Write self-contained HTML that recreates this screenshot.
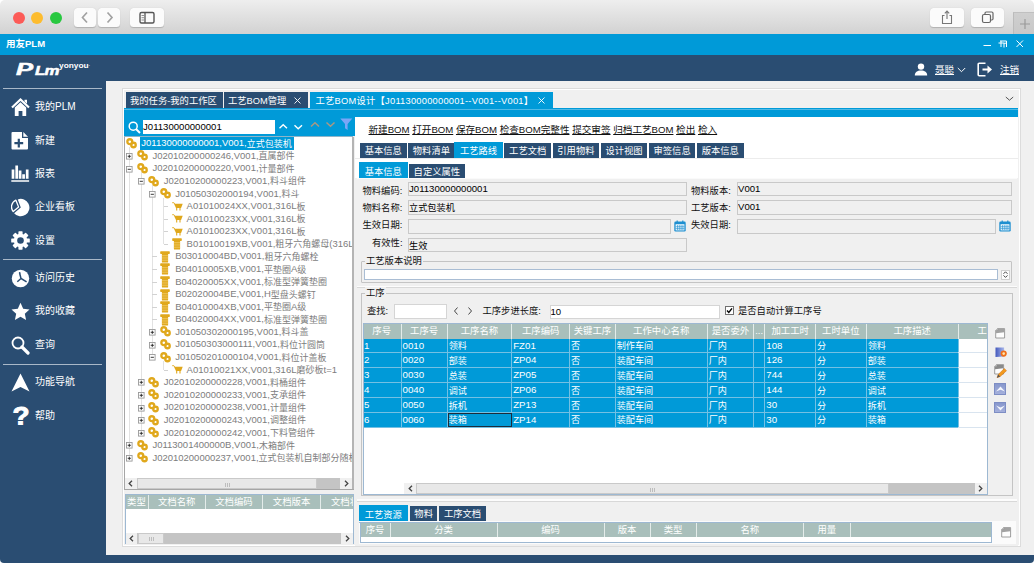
<!DOCTYPE html>
<html><head><meta charset="utf-8"><title>用友PLM</title>
<style>
*{box-sizing:border-box;margin:0;padding:0}
html,body{width:1034px;height:563px;overflow:hidden;background:#fff}
body{font-family:"Liberation Sans","Noto Sans CJK SC",sans-serif;font-size:10px;color:#000;position:relative}
div,svg{position:absolute}
.t{white-space:nowrap;line-height:12px}
#win{left:0;top:0;width:1034px;height:563px;border-radius:5px 5px 4px 4px;overflow:hidden}
#mac{left:0;top:0;width:1034px;height:34px;background:linear-gradient(#eeeeee,#d2d2d2)}
.tl{top:12px;width:12px;height:12px;border-radius:50%}
.mbtn{top:8px;height:19px;background:#fbfbfb;border-radius:3.5px;box-shadow:0 0.5px 1px rgba(0,0,0,.18)}
#blue{left:0;top:34px;width:1034px;height:21px;background:#009ad8}
#hdr{left:0;top:55px;width:1034px;height:26px;background:#2a4d72}
#side{left:0;top:81px;width:106px;height:482px;background:#2a4d72}
.sep{left:3px;width:99px;height:1px;background:#a9b8c8}
.nav{left:35px;color:#fff;font-size:10px;line-height:14px;white-space:nowrap}
#main{left:106px;top:81px;width:928px;height:474.2px;background:#f0f0f0}
#inner{left:122.5px;top:89px;width:897.5px;height:457px;background:#f0f0f0;border:1px solid #fff;box-shadow:0 0 0 1px #dcdcdc}
.tab{top:92.2px;height:15.9px;background:#2a4d72;color:#fff;font-size:9.3px;line-height:18px;white-space:nowrap;padding-left:4px;overflow:hidden}
.tab.on{background:#009ad8}
.tab2{height:15.5px;background:#2a4d72;color:#fff;font-size:9.3px;line-height:15.5px;overflow:hidden;padding-top:1.3px;white-space:nowrap;text-align:center}
.tab2.on{background:#009ad8}
.tr{left:0;height:12.58px;width:230px;color:#7d7d7d;font-size:9.5px;line-height:12.6px;white-space:nowrap}
.tr .x{top:0;white-space:nowrap}
.inp{background:#f0f0f0;border:1px solid #c9c9c9;height:14.5px;font-size:9.6px;line-height:12px;padding-left:0;white-space:nowrap;overflow:hidden}
.lab{font-size:9.3px;line-height:12px;white-space:nowrap;color:#111}
.th{top:0;height:100%;color:#fff;font-size:9.4px;text-align:center;white-space:nowrap;border-right:1px solid #e4ecea;overflow:hidden}
.td{top:0;height:100%;color:#fff;font-size:9.7px;white-space:nowrap;border-right:1px solid #74c0e3;padding-left:1px;overflow:hidden}
.row{left:0;height:14.84px;background:#009ad8;border-bottom:1px solid #74c0e3;line-height:14px}
.sb{background:#c4c4c4}
.sbt{background:#e8e8e8;border:1px solid #c9c9c9}
.sba{background:#f0f0f0;color:#444;font-size:8px;font-weight:bold;text-align:center}
</style></head><body>
<div id="win">
<div id="mac">
<div class="tl" style="left:13px;background:#fc5b57"></div>
<div class="tl" style="left:31px;background:#fdbc2e"></div>
<div class="tl" style="left:50px;background:#28c840"></div>
<div class="mbtn" style="left:73.5px;width:22px"><svg style="left:0;top:0" width="22" height="19" viewBox="0 0 22 19"><path d="M13 4.5 L8.5 9.5 L13 14.5" fill="none" stroke="#a2a2a2" stroke-width="1.7"/></svg></div>
<div class="mbtn" style="left:97.5px;width:22.5px"><svg style="left:0;top:0" width="22" height="19" viewBox="0 0 22 19"><path d="M9.5 4.5 L14 9.5 L9.5 14.5" fill="none" stroke="#a2a2a2" stroke-width="1.7"/></svg></div>
<div class="mbtn" style="left:130px;width:33.5px"><svg style="left:0;top:0" width="33.5" height="19" viewBox="0 0 33.5 19"><rect x="10" y="4.5" width="14" height="10.5" rx="1.5" fill="none" stroke="#555" stroke-width="1.4"/><path d="M15 4.5 V15" stroke="#555" stroke-width="1.3"/><path d="M11.5 7.5h2.5M11.5 9.7h2.5M11.5 12h2.5" stroke="#777" stroke-width="0.8"/></svg></div>
<div class="mbtn" style="left:929.5px;width:34px"><svg style="left:0;top:0" width="34" height="19" viewBox="0 0 34 19"><path d="M14.5 7.5h-2v8h9v-8h-2" fill="none" stroke="#777" stroke-width="1.1"/><path d="M17 11V3.2M14.8 5.3L17 3l2.2 2.3" fill="none" stroke="#777" stroke-width="1.1"/></svg></div>
<div class="mbtn" style="left:971px;width:33px"><svg style="left:0;top:0" width="33" height="19" viewBox="0 0 33 19"><rect x="11.5" y="6.5" width="8" height="8" rx="1.5" fill="none" stroke="#666" stroke-width="1.2"/><path d="M14 6.5V5.2a1.2 1.2 0 0 1 1.2-1.2h5.6a1.2 1.2 0 0 1 1.2 1.2v5.600000000000001a1.2 1.2 0 0 1-1.2 1.2H19.5" fill="none" stroke="#666" stroke-width="1.2"/></svg></div>
<div style="left:1013px;top:12px;width:21px;height:22px;background:linear-gradient(#cfcfcf,#c8c8c8);border-left:1px solid #bbb;border-top:1px solid #c0c0c0"><svg style="left:4.5px;top:4.5px" width="12" height="12" viewBox="0 0 12 12"><path d="M6 1v10M1 6h10" stroke="#9a9a9a" stroke-width="1.2"/></svg></div>
</div>
<div id="blue"><div class="t" style="left:6px;top:4px;color:#fff;font-weight:bold;font-size:9.5px">用友PLM</div>
<svg style="left:982px;top:4px" width="44" height="12" viewBox="0 0 44 12"><path d="M1.5 7.5h7.5" stroke="#fff" stroke-width="1"/><path d="M18 3h6.5v6M16.5 5h5.5v4.5M19 3v6M22 5.2h2" stroke="#fff" stroke-width="1" fill="none"/><path d="M34.5 2.5l6.5 6.5M41 2.5l-6.500000 6.5" stroke="#fff" stroke-width="1"/></svg>
</div>
<div id="hdr">
<div class="t" style="left:15.5px;top:6.5px;color:#fff;font-weight:bold;font-style:italic;font-size:16px;line-height:16px;-webkit-text-stroke:0.5px #fff;transform:scaleX(1.6);transform-origin:0 0">P</div>
<div class="t" style="left:35px;top:9.5px;color:#fff;font-weight:bold;font-style:italic;font-size:12.5px;line-height:13px;letter-spacing:-0.6px;transform:scaleX(1.35);transform-origin:0 0;-webkit-text-stroke:0.5px #fff">Lm</div>
<div class="t" style="left:59px;top:6.5px;color:#fff;font-weight:bold;font-size:6.5px;line-height:7px;transform:scaleX(1.28);transform-origin:0 0">yonyou<span style="font-size:4px;vertical-align:top">·</span></div>
<svg style="left:914px;top:8px" width="14" height="13" viewBox="0 0 14 13"><circle cx="7" cy="3.6" r="3.2" fill="#fff"/><path d="M0.800000 12.5c0-3.300000 2.500000-5 6.200000-5s6.200000 1.700000 6.200000 5z" fill="#fff"/></svg>
<div class="t" style="left:935px;top:9px;color:#fff;font-size:9.5px;text-decoration:underline">聂聪</div>
<svg style="left:957px;top:11.500000px" width="9" height="6" viewBox="0 0 9 6"><path d="M0.800000 1l3.700000 3.700000L8.200000 1" fill="none" stroke="#fff" stroke-width="1"/></svg>
<svg style="left:977px;top:7px" width="16" height="15" viewBox="0 0 16 15"><path d="M8.500000 1.200000H2.200000a1 1 0 0 0-1 1v10.600000a1 1 0 0 0 1 1h6.300000" fill="none" stroke="#fff" stroke-width="1.600000"/><path d="M5.500000 7.500000h6" fill="none" stroke="#fff" stroke-width="2"/><path d="M10.500000 3.500000l4.500000 4l-4.500000 4z" fill="#fff"/></svg>
<div class="t" style="left:1000px;top:9px;color:#fff;font-size:9.5px;text-decoration:underline">注销</div>
</div>
<div id="side">
<div class="sep" style="top:7px"></div>
<div class="sep" style="top:178px"></div>
<div class="sep" style="top:282.5px"></div>
<svg style="left:10.5px;top:16.7px" width="19" height="19" viewBox="0 0 19 19"><path d="M1 9.5L9.5 1.5L18 9.5" fill="none" stroke="#fff" stroke-width="2.2"/><path d="M13.5 1.8h2.5v4l-2.5-2.3z" fill="#fff"/><path d="M3.8 9.5L9.5 4.2l5.7 5.3V18h-3.8v-5h-3.8v5H3.8z" fill="#fff"/></svg><div class="nav" style="top:19.2px">我的PLM</div>
<svg style="left:10.5px;top:50.3px" width="19" height="19" viewBox="0 0 19 19"><path d="M1.5 1h9.5v6h6v10.5a1 1 0 0 1-1 1h-14.5a1 1 0 0 1-1-1v-15.5a1 1 0 0 1 1-1z" fill="#fff"/><path d="M12.3 1l4.7 4.7h-4.7z" fill="#fff"/><path d="M7.8 7.8v8.8M3.4 12.2h8.8" stroke="#2a4d72" stroke-width="2.2"/></svg><div class="nav" style="top:52.8px">新建</div>
<svg style="left:10.5px;top:83.8px" width="19" height="19" viewBox="0 0 19 19"><path d="M0.3 15.9h17.8" stroke="#fff" stroke-width="1.5"/><path d="M2 4.5v9.2M5.7 0.4v13.3M9.1 5.4v8.3M12.6 9.3v4.4M16.2 4.5v9.2" stroke="#fff" stroke-width="2.7"/></svg><div class="nav" style="top:86.3px">报表</div>
<svg style="left:10.5px;top:116.8px" width="19" height="19" viewBox="0 0 19 19"><path d="M9.8 9.6L6.8 1.4A8.7 8.7 0 1 1 3.1 15.2z" fill="#fff"/><path d="M7.6 9L2.2 13.5A7.3 7.3 0 0 1 4.9 2.2z" fill="none" stroke="#fff" stroke-width="1.3" stroke-linejoin="round"/></svg><div class="nav" style="top:119.3px">企业看板</div>
<svg style="left:10.5px;top:150.0px" width="19" height="19" viewBox="0 0 19 19"><g transform="translate(9.5 9.5)"><g fill="#fff"><rect x="-2.1" y="-9.3" width="4.2" height="18.6" rx="0.7"/><rect x="-2.1" y="-9.3" width="4.2" height="18.6" rx="0.7" transform="rotate(45)"/><rect x="-2.1" y="-9.3" width="4.2" height="18.6" rx="0.7" transform="rotate(90)"/><rect x="-2.1" y="-9.3" width="4.2" height="18.6" rx="0.7" transform="rotate(135)"/><circle r="6.7"/></g><circle r="3.3" fill="#2a4d72"/></g></svg><div class="nav" style="top:152.5px">设置</div>
<svg style="left:10.5px;top:187.5px" width="19" height="19" viewBox="0 0 19 19"><circle cx="9.5" cy="9.5" r="8.7" fill="#fff"/><circle cx="8.7" cy="4" r="0.9" fill="#2a4d72"/><path d="M8.7 4.5l1.3 5l5.6 3.3M10 9.5l-3.7 3.3" fill="none" stroke="#2a4d72" stroke-width="1.5"/></svg><div class="nav" style="top:190.0px">访问历史</div>
<svg style="left:10.5px;top:220.9px" width="19" height="19" viewBox="0 0 19 19"><path d="M9.5 0.8l2.7 5.9 6.3 0.7-4.7 4.3 1.3 6.3-5.6-3.2-5.6 3.2 1.3-6.3-4.7-4.3 6.3-0.7z" fill="#fff"/></svg><div class="nav" style="top:223.4px">我的收藏</div>
<svg style="left:10.5px;top:254.5px" width="19" height="19" viewBox="0 0 19 19"><circle cx="7" cy="7" r="5.5" fill="none" stroke="#fff" stroke-width="1.8"/><path d="M11 11l6 6" stroke="#fff" stroke-width="3.2" stroke-linecap="round"/></svg><div class="nav" style="top:257.0px">查询</div>
<svg style="left:10.5px;top:291.5px" width="19" height="19" viewBox="0 0 19 19"><path d="M9.5 0.5L18.5 18.5L9.5 14L0.5 18.5z" fill="#fff"/></svg><div class="nav" style="top:294.0px">功能导航</div>
<svg style="left:10.5px;top:325.2px" width="19" height="19" viewBox="0 0 19 19"><text x="0" y="18.5" font-family="Liberation Sans,sans-serif" font-weight="bold" font-size="25" fill="#fff" stroke="#fff" stroke-width="0.9" transform="translate(1.5 0) scale(1.12 1)">?</text></svg><div class="nav" style="top:327.7px">帮助</div>
</div>
<div style="left:106px;top:555px;width:928px;height:8px;background:#2a4d72"></div>
<div id="main"></div>
<div id="inner"></div>
<div class="tab" style="left:126px;width:96.5px">我的任务-我的工作区</div>
<div class="tab" style="left:224px;width:83.5px">工艺BOM管理<svg style="left:70px;top:4.5px" width="7" height="7" viewBox="0 0 7 7"><path d="M0.5 0.5l6 6M6.5 0.5l-6 6" stroke="#fff" stroke-width="0.9"/></svg></div>
<div class="tab on" style="left:309.5px;width:243.5px;padding-left:6px;letter-spacing:0.24px">工艺BOM设计【J01130000000001--V001--V001】<svg style="left:228.5px;top:4.5px" width="7" height="7" viewBox="0 0 7 7"><path d="M0.5 0.5l6 6M6.5 0.5l-6 6" stroke="#fff" stroke-width="0.9"/></svg></div>
<svg style="left:1005px;top:96px" width="9" height="6" viewBox="0 0 9 6"><path d="M0.8 1l3.7 3.2L8.2 1" fill="none" stroke="#555" stroke-width="1"/></svg>
<div style="left:124px;top:108px;width:893.5px;height:8.7px;background:#009ad8"></div>
<div style="left:124px;top:108px;width:230.5px;height:28.3px;background:#009ad8"></div>
<div style="left:124px;top:108.8px;width:893.5px;height:1px;background:#4fb9e6"></div>
<svg style="left:128px;top:120.8px" width="13" height="13" viewBox="0 0 13 13"><circle cx="5.2" cy="5.2" r="4" fill="none" stroke="#fff" stroke-width="1.5"/><path d="M8 8l4 4" stroke="#fff" stroke-width="2"/></svg>
<div style="left:142.5px;top:119.5px;width:132.5px;height:14px;background:#fff"><div class="t" style="left:0.5px;top:1px;font-size:9.6px">J01130000000001</div></div>
<svg style="left:278px;top:121px" width="76" height="12" viewBox="0 0 76 12" overflow="visible"><path d="M1.5 7.2l3.7-3.5L9 7.2" fill="none" stroke="#fff" stroke-width="1.4"/><path d="M16.5 4.2l3.7 3.5L24 4.2" fill="none" stroke="#fff" stroke-width="1.4"/><path d="M33 5.5l4-3.7 4 3.7" fill="none" stroke="#aa9882" stroke-width="1.5"/><path d="M48.5 1.5l4 3.7 4-3.7" fill="none" stroke="#aa9882" stroke-width="1.5"/><path d="M62.3 -2.5h12l-4.7 5.5v6l-2.6-1.8v-4.2z" fill="#7aa6f7"/></svg>
<div style="left:124px;top:136.5px;width:229.5px;height:342px;background:#fff;overflow:hidden">
<div style="left:5.2px;top:10.7px;width:1px;height:307.5px;background:#e2e2e2"></div><div style="left:16.6px;top:35.9px;width:1px;height:257.2px;background:#e2e2e2"></div><div style="left:28.0px;top:48.4px;width:1px;height:169.1px;background:#e2e2e2"></div><div style="left:39.4px;top:61.0px;width:1px;height:46.3px;background:#e2e2e2"></div><div style="left:39.4px;top:224.6px;width:1px;height:8.6px;background:#e2e2e2"></div><div class="tr" style="top:0.70px"><svg style="left:2.4px;top:0.6px" width="12" height="12" viewBox="0 0 12 12"><circle cx="3.8" cy="3.7" r="2.45" fill="none" stroke="#e0a81c" stroke-width="2.3"/><circle cx="7.5" cy="7" r="2.25" fill="none" stroke="#e0a81c" stroke-width="2.3"/></svg><div class="x" style="left:15.9px;width:154.6px;height:12.4px;background:#009ad8;color:#fff;padding-left:1.4px">J01130000000001,V001,<span style="font-size:9px;position:relative;top:0.5px">立式包装机</span></div></div>
<div class="tr" style="top:13.28px"><svg style="left:2.4px;top:3.2px" width="7" height="7" viewBox="0 0 7 7"><rect x="0.5" y="0.5" width="5.6" height="5.6" fill="#fff" stroke="#999" stroke-width="0.9"/><path d="M1.7 3.3h3.2" stroke="#222" stroke-width="0.9"/><path d="M3.3 1.7v3.2" stroke="#222" stroke-width="0.9"/></svg><svg style="left:13.0px;top:0.6px" width="12" height="12" viewBox="0 0 12 12"><circle cx="3.8" cy="3.7" r="2.45" fill="none" stroke="#e0a81c" stroke-width="2.3"/><circle cx="7.5" cy="7" r="2.25" fill="none" stroke="#e0a81c" stroke-width="2.3"/></svg><div class="x" style="left:28.4px">J02010200000246,V001,<span style="font-size:9px;position:relative;top:0.5px">直属部件</span></div></div>
<div class="tr" style="top:25.86px"><svg style="left:2.4px;top:3.2px" width="7" height="7" viewBox="0 0 7 7"><rect x="0.5" y="0.5" width="5.6" height="5.6" fill="#fff" stroke="#999" stroke-width="0.9"/><path d="M1.7 3.3h3.2" stroke="#222" stroke-width="0.9"/></svg><svg style="left:13.0px;top:0.6px" width="12" height="12" viewBox="0 0 12 12"><circle cx="3.8" cy="3.7" r="2.45" fill="none" stroke="#e0a81c" stroke-width="2.3"/><circle cx="7.5" cy="7" r="2.25" fill="none" stroke="#e0a81c" stroke-width="2.3"/></svg><div class="x" style="left:28.4px">J02010200000220,V001,<span style="font-size:9px;position:relative;top:0.5px">计量部件</span></div></div>
<div class="tr" style="top:38.44px"><svg style="left:13.8px;top:3.2px" width="7" height="7" viewBox="0 0 7 7"><rect x="0.5" y="0.5" width="5.6" height="5.6" fill="#fff" stroke="#999" stroke-width="0.9"/><path d="M1.7 3.3h3.2" stroke="#222" stroke-width="0.9"/></svg><svg style="left:24.4px;top:0.6px" width="12" height="12" viewBox="0 0 12 12"><circle cx="3.8" cy="3.7" r="2.45" fill="none" stroke="#e0a81c" stroke-width="2.3"/><circle cx="7.5" cy="7" r="2.25" fill="none" stroke="#e0a81c" stroke-width="2.3"/></svg><div class="x" style="left:39.8px">J02010200000223,V001,<span style="font-size:9px;position:relative;top:0.5px">料斗组件</span></div></div>
<div class="tr" style="top:51.02px"><svg style="left:25.2px;top:3.2px" width="7" height="7" viewBox="0 0 7 7"><rect x="0.5" y="0.5" width="5.6" height="5.6" fill="#fff" stroke="#999" stroke-width="0.9"/><path d="M1.7 3.3h3.2" stroke="#222" stroke-width="0.9"/></svg><svg style="left:35.8px;top:0.6px" width="12" height="12" viewBox="0 0 12 12"><circle cx="3.8" cy="3.7" r="2.45" fill="none" stroke="#e0a81c" stroke-width="2.3"/><circle cx="7.5" cy="7" r="2.25" fill="none" stroke="#e0a81c" stroke-width="2.3"/></svg><div class="x" style="left:51.2px">J01050302000194,V001,<span style="font-size:9px;position:relative;top:0.5px">料斗</span></div></div>
<div class="tr" style="top:63.60px"><div style="left:39.8px;top:6px;width:4.5px;height:1px;background:#d2d2d2"></div><svg style="left:47.8px;top:1.8px" width="11" height="9" viewBox="0 0 11 9"><path d="M0.2 0.7H1.9L2.7 2" fill="none" stroke="#e0a81c" stroke-width="0.9"/><path d="M2 1.7H10.7L9.1 6H4z" fill="#e0a81c"/><path d="M4.7 5.8V8.6M8 5.8V8.6" stroke="#e0a81c" stroke-width="1.1"/></svg><div class="x" style="left:62.6px">A01010024XX,V001,316L<span style="font-size:9px;position:relative;top:0.5px">板</span></div></div>
<div class="tr" style="top:76.18px"><div style="left:39.8px;top:6px;width:4.5px;height:1px;background:#d2d2d2"></div><svg style="left:47.8px;top:1.8px" width="11" height="9" viewBox="0 0 11 9"><path d="M0.2 0.7H1.9L2.7 2" fill="none" stroke="#e0a81c" stroke-width="0.9"/><path d="M2 1.7H10.7L9.1 6H4z" fill="#e0a81c"/><path d="M4.7 5.8V8.6M8 5.8V8.6" stroke="#e0a81c" stroke-width="1.1"/></svg><div class="x" style="left:62.6px">A01010023XX,V001,316L<span style="font-size:9px;position:relative;top:0.5px">板</span></div></div>
<div class="tr" style="top:88.76px"><div style="left:39.8px;top:6px;width:4.5px;height:1px;background:#d2d2d2"></div><svg style="left:47.8px;top:1.8px" width="11" height="9" viewBox="0 0 11 9"><path d="M0.2 0.7H1.9L2.7 2" fill="none" stroke="#e0a81c" stroke-width="0.9"/><path d="M2 1.7H10.7L9.1 6H4z" fill="#e0a81c"/><path d="M4.7 5.8V8.6M8 5.8V8.6" stroke="#e0a81c" stroke-width="1.1"/></svg><div class="x" style="left:62.6px">A01010023XX,V001,316L<span style="font-size:9px;position:relative;top:0.5px">板</span></div></div>
<div class="tr" style="top:101.34px"><div style="left:39.8px;top:6px;width:4.5px;height:1px;background:#d2d2d2"></div><svg style="left:47.6px;top:0.4px" width="10" height="12" viewBox="0 0 10 12"><rect x="0.2" y="0.2" width="9.6" height="2.7" rx="0.7" fill="#e0a81c"/><path d="M1.9 2.8h6.2v8.2a0.6 0.6 0 0 1-0.6 0.6h-5a0.6 0.6 0 0 1-0.6-0.6z" fill="#e0a81c"/><path d="M1.9 4.5h6.2M1.9 6.2h6.2M1.9 7.9h6.2M1.9 9.6h6.2" stroke="#f1cf74" stroke-width="0.6"/></svg><div class="x" style="left:62.6px">B01010019XB,V001,<span style="font-size:9px;position:relative;top:0.5px">粗牙六角螺母</span>(316L</div></div>
<div class="tr" style="top:113.92px"><div style="left:28.4px;top:6px;width:4.5px;height:1px;background:#d2d2d2"></div><svg style="left:36.2px;top:0.4px" width="10" height="12" viewBox="0 0 10 12"><rect x="0.2" y="0.2" width="9.6" height="2.7" rx="0.7" fill="#e0a81c"/><path d="M1.9 2.8h6.2v8.2a0.6 0.6 0 0 1-0.6 0.6h-5a0.6 0.6 0 0 1-0.6-0.6z" fill="#e0a81c"/><path d="M1.9 4.5h6.2M1.9 6.2h6.2M1.9 7.9h6.2M1.9 9.6h6.2" stroke="#f1cf74" stroke-width="0.6"/></svg><div class="x" style="left:51.2px">B03010004BD,V001,<span style="font-size:9px;position:relative;top:0.5px">粗牙六角螺栓</span></div></div>
<div class="tr" style="top:126.50px"><div style="left:28.4px;top:6px;width:4.5px;height:1px;background:#d2d2d2"></div><svg style="left:36.2px;top:0.4px" width="10" height="12" viewBox="0 0 10 12"><rect x="0.2" y="0.2" width="9.6" height="2.7" rx="0.7" fill="#e0a81c"/><path d="M1.9 2.8h6.2v8.2a0.6 0.6 0 0 1-0.6 0.6h-5a0.6 0.6 0 0 1-0.6-0.6z" fill="#e0a81c"/><path d="M1.9 4.5h6.2M1.9 6.2h6.2M1.9 7.9h6.2M1.9 9.6h6.2" stroke="#f1cf74" stroke-width="0.6"/></svg><div class="x" style="left:51.2px">B04010005XB,V001,<span style="font-size:9px;position:relative;top:0.5px">平垫圈</span>A<span style="font-size:9px;position:relative;top:0.5px">级</span></div></div>
<div class="tr" style="top:139.08px"><div style="left:28.4px;top:6px;width:4.5px;height:1px;background:#d2d2d2"></div><svg style="left:36.2px;top:0.4px" width="10" height="12" viewBox="0 0 10 12"><rect x="0.2" y="0.2" width="9.6" height="2.7" rx="0.7" fill="#e0a81c"/><path d="M1.9 2.8h6.2v8.2a0.6 0.6 0 0 1-0.6 0.6h-5a0.6 0.6 0 0 1-0.6-0.6z" fill="#e0a81c"/><path d="M1.9 4.5h6.2M1.9 6.2h6.2M1.9 7.9h6.2M1.9 9.6h6.2" stroke="#f1cf74" stroke-width="0.6"/></svg><div class="x" style="left:51.2px">B04020005XX,V001,<span style="font-size:9px;position:relative;top:0.5px">标准型弹簧垫圈</span></div></div>
<div class="tr" style="top:151.66px"><div style="left:28.4px;top:6px;width:4.5px;height:1px;background:#d2d2d2"></div><svg style="left:36.2px;top:0.4px" width="10" height="12" viewBox="0 0 10 12"><rect x="0.2" y="0.2" width="9.6" height="2.7" rx="0.7" fill="#e0a81c"/><path d="M1.9 2.8h6.2v8.2a0.6 0.6 0 0 1-0.6 0.6h-5a0.6 0.6 0 0 1-0.6-0.6z" fill="#e0a81c"/><path d="M1.9 4.5h6.2M1.9 6.2h6.2M1.9 7.9h6.2M1.9 9.6h6.2" stroke="#f1cf74" stroke-width="0.6"/></svg><div class="x" style="left:51.2px">B02020004BE,V001,H<span style="font-size:9px;position:relative;top:0.5px">型盘头螺钉</span></div></div>
<div class="tr" style="top:164.24px"><div style="left:28.4px;top:6px;width:4.5px;height:1px;background:#d2d2d2"></div><svg style="left:36.2px;top:0.4px" width="10" height="12" viewBox="0 0 10 12"><rect x="0.2" y="0.2" width="9.6" height="2.7" rx="0.7" fill="#e0a81c"/><path d="M1.9 2.8h6.2v8.2a0.6 0.6 0 0 1-0.6 0.6h-5a0.6 0.6 0 0 1-0.6-0.6z" fill="#e0a81c"/><path d="M1.9 4.5h6.2M1.9 6.2h6.2M1.9 7.9h6.2M1.9 9.6h6.2" stroke="#f1cf74" stroke-width="0.6"/></svg><div class="x" style="left:51.2px">B04010004XB,V001,<span style="font-size:9px;position:relative;top:0.5px">平垫圈</span>A<span style="font-size:9px;position:relative;top:0.5px">级</span></div></div>
<div class="tr" style="top:176.82px"><div style="left:28.4px;top:6px;width:4.5px;height:1px;background:#d2d2d2"></div><svg style="left:36.2px;top:0.4px" width="10" height="12" viewBox="0 0 10 12"><rect x="0.2" y="0.2" width="9.6" height="2.7" rx="0.7" fill="#e0a81c"/><path d="M1.9 2.8h6.2v8.2a0.6 0.6 0 0 1-0.6 0.6h-5a0.6 0.6 0 0 1-0.6-0.6z" fill="#e0a81c"/><path d="M1.9 4.5h6.2M1.9 6.2h6.2M1.9 7.9h6.2M1.9 9.6h6.2" stroke="#f1cf74" stroke-width="0.6"/></svg><div class="x" style="left:51.2px">B04020004XX,V001,<span style="font-size:9px;position:relative;top:0.5px">标准型弹簧垫圈</span></div></div>
<div class="tr" style="top:189.40px"><svg style="left:25.2px;top:3.2px" width="7" height="7" viewBox="0 0 7 7"><rect x="0.5" y="0.5" width="5.6" height="5.6" fill="#fff" stroke="#999" stroke-width="0.9"/><path d="M1.7 3.3h3.2" stroke="#222" stroke-width="0.9"/><path d="M3.3 1.7v3.2" stroke="#222" stroke-width="0.9"/></svg><svg style="left:35.8px;top:0.6px" width="12" height="12" viewBox="0 0 12 12"><circle cx="3.8" cy="3.7" r="2.45" fill="none" stroke="#e0a81c" stroke-width="2.3"/><circle cx="7.5" cy="7" r="2.25" fill="none" stroke="#e0a81c" stroke-width="2.3"/></svg><div class="x" style="left:51.2px">J01050302000195,V001,<span style="font-size:9px;position:relative;top:0.5px">料斗盖</span></div></div>
<div class="tr" style="top:201.98px"><svg style="left:25.2px;top:3.2px" width="7" height="7" viewBox="0 0 7 7"><rect x="0.5" y="0.5" width="5.6" height="5.6" fill="#fff" stroke="#999" stroke-width="0.9"/><path d="M1.7 3.3h3.2" stroke="#222" stroke-width="0.9"/><path d="M3.3 1.7v3.2" stroke="#222" stroke-width="0.9"/></svg><svg style="left:35.8px;top:0.6px" width="12" height="12" viewBox="0 0 12 12"><circle cx="3.8" cy="3.7" r="2.45" fill="none" stroke="#e0a81c" stroke-width="2.3"/><circle cx="7.5" cy="7" r="2.25" fill="none" stroke="#e0a81c" stroke-width="2.3"/></svg><div class="x" style="left:51.2px">J01050303000111,V001,<span style="font-size:9px;position:relative;top:0.5px">料位计圆筒</span></div></div>
<div class="tr" style="top:214.56px"><svg style="left:25.2px;top:3.2px" width="7" height="7" viewBox="0 0 7 7"><rect x="0.5" y="0.5" width="5.6" height="5.6" fill="#fff" stroke="#999" stroke-width="0.9"/><path d="M1.7 3.3h3.2" stroke="#222" stroke-width="0.9"/></svg><svg style="left:35.8px;top:0.6px" width="12" height="12" viewBox="0 0 12 12"><circle cx="3.8" cy="3.7" r="2.45" fill="none" stroke="#e0a81c" stroke-width="2.3"/><circle cx="7.5" cy="7" r="2.25" fill="none" stroke="#e0a81c" stroke-width="2.3"/></svg><div class="x" style="left:51.2px">J01050201000104,V001,<span style="font-size:9px;position:relative;top:0.5px">料位计盖板</span></div></div>
<div class="tr" style="top:227.14px"><div style="left:39.8px;top:6px;width:4.5px;height:1px;background:#d2d2d2"></div><svg style="left:47.8px;top:1.8px" width="11" height="9" viewBox="0 0 11 9"><path d="M0.2 0.7H1.9L2.7 2" fill="none" stroke="#e0a81c" stroke-width="0.9"/><path d="M2 1.7H10.7L9.1 6H4z" fill="#e0a81c"/><path d="M4.7 5.8V8.6M8 5.8V8.6" stroke="#e0a81c" stroke-width="1.1"/></svg><div class="x" style="left:62.6px">A01010021XX,V001,316L<span style="font-size:9px;position:relative;top:0.5px">磨砂板</span>t=1</div></div>
<div class="tr" style="top:239.72px"><svg style="left:13.8px;top:3.2px" width="7" height="7" viewBox="0 0 7 7"><rect x="0.5" y="0.5" width="5.6" height="5.6" fill="#fff" stroke="#999" stroke-width="0.9"/><path d="M1.7 3.3h3.2" stroke="#222" stroke-width="0.9"/><path d="M3.3 1.7v3.2" stroke="#222" stroke-width="0.9"/></svg><svg style="left:24.4px;top:0.6px" width="12" height="12" viewBox="0 0 12 12"><circle cx="3.8" cy="3.7" r="2.45" fill="none" stroke="#e0a81c" stroke-width="2.3"/><circle cx="7.5" cy="7" r="2.25" fill="none" stroke="#e0a81c" stroke-width="2.3"/></svg><div class="x" style="left:39.8px">J02010200000228,V001,<span style="font-size:9px;position:relative;top:0.5px">料桶组件</span></div></div>
<div class="tr" style="top:252.30px"><svg style="left:13.8px;top:3.2px" width="7" height="7" viewBox="0 0 7 7"><rect x="0.5" y="0.5" width="5.6" height="5.6" fill="#fff" stroke="#999" stroke-width="0.9"/><path d="M1.7 3.3h3.2" stroke="#222" stroke-width="0.9"/><path d="M3.3 1.7v3.2" stroke="#222" stroke-width="0.9"/></svg><svg style="left:24.4px;top:0.6px" width="12" height="12" viewBox="0 0 12 12"><circle cx="3.8" cy="3.7" r="2.45" fill="none" stroke="#e0a81c" stroke-width="2.3"/><circle cx="7.5" cy="7" r="2.25" fill="none" stroke="#e0a81c" stroke-width="2.3"/></svg><div class="x" style="left:39.8px">J02010200000233,V001,<span style="font-size:9px;position:relative;top:0.5px">支承组件</span></div></div>
<div class="tr" style="top:264.88px"><svg style="left:13.8px;top:3.2px" width="7" height="7" viewBox="0 0 7 7"><rect x="0.5" y="0.5" width="5.6" height="5.6" fill="#fff" stroke="#999" stroke-width="0.9"/><path d="M1.7 3.3h3.2" stroke="#222" stroke-width="0.9"/><path d="M3.3 1.7v3.2" stroke="#222" stroke-width="0.9"/></svg><svg style="left:24.4px;top:0.6px" width="12" height="12" viewBox="0 0 12 12"><circle cx="3.8" cy="3.7" r="2.45" fill="none" stroke="#e0a81c" stroke-width="2.3"/><circle cx="7.5" cy="7" r="2.25" fill="none" stroke="#e0a81c" stroke-width="2.3"/></svg><div class="x" style="left:39.8px">J02010200000238,V001,<span style="font-size:9px;position:relative;top:0.5px">计量组件</span></div></div>
<div class="tr" style="top:277.46px"><svg style="left:13.8px;top:3.2px" width="7" height="7" viewBox="0 0 7 7"><rect x="0.5" y="0.5" width="5.6" height="5.6" fill="#fff" stroke="#999" stroke-width="0.9"/><path d="M1.7 3.3h3.2" stroke="#222" stroke-width="0.9"/><path d="M3.3 1.7v3.2" stroke="#222" stroke-width="0.9"/></svg><svg style="left:24.4px;top:0.6px" width="12" height="12" viewBox="0 0 12 12"><circle cx="3.8" cy="3.7" r="2.45" fill="none" stroke="#e0a81c" stroke-width="2.3"/><circle cx="7.5" cy="7" r="2.25" fill="none" stroke="#e0a81c" stroke-width="2.3"/></svg><div class="x" style="left:39.8px">J02010200000243,V001,<span style="font-size:9px;position:relative;top:0.5px">调整组件</span></div></div>
<div class="tr" style="top:290.04px"><svg style="left:13.8px;top:3.2px" width="7" height="7" viewBox="0 0 7 7"><rect x="0.5" y="0.5" width="5.6" height="5.6" fill="#fff" stroke="#999" stroke-width="0.9"/><path d="M1.7 3.3h3.2" stroke="#222" stroke-width="0.9"/><path d="M3.3 1.7v3.2" stroke="#222" stroke-width="0.9"/></svg><svg style="left:24.4px;top:0.6px" width="12" height="12" viewBox="0 0 12 12"><circle cx="3.8" cy="3.7" r="2.45" fill="none" stroke="#e0a81c" stroke-width="2.3"/><circle cx="7.5" cy="7" r="2.25" fill="none" stroke="#e0a81c" stroke-width="2.3"/></svg><div class="x" style="left:39.8px">J02010200000242,V001,<span style="font-size:9px;position:relative;top:0.5px">下料管组件</span></div></div>
<div class="tr" style="top:302.62px"><svg style="left:2.4px;top:3.2px" width="7" height="7" viewBox="0 0 7 7"><rect x="0.5" y="0.5" width="5.6" height="5.6" fill="#fff" stroke="#999" stroke-width="0.9"/><path d="M1.7 3.3h3.2" stroke="#222" stroke-width="0.9"/><path d="M3.3 1.7v3.2" stroke="#222" stroke-width="0.9"/></svg><svg style="left:13.0px;top:0.6px" width="12" height="12" viewBox="0 0 12 12"><circle cx="3.8" cy="3.7" r="2.45" fill="none" stroke="#e0a81c" stroke-width="2.3"/><circle cx="7.5" cy="7" r="2.25" fill="none" stroke="#e0a81c" stroke-width="2.3"/></svg><div class="x" style="left:28.4px">J0113001400000B,V001,<span style="font-size:9px;position:relative;top:0.5px">木箱部件</span></div></div>
<div class="tr" style="top:315.20px"><svg style="left:2.4px;top:3.2px" width="7" height="7" viewBox="0 0 7 7"><rect x="0.5" y="0.5" width="5.6" height="5.6" fill="#fff" stroke="#999" stroke-width="0.9"/><path d="M1.7 3.3h3.2" stroke="#222" stroke-width="0.9"/><path d="M3.3 1.7v3.2" stroke="#222" stroke-width="0.9"/></svg><svg style="left:13.0px;top:0.6px" width="12" height="12" viewBox="0 0 12 12"><circle cx="3.8" cy="3.7" r="2.45" fill="none" stroke="#e0a81c" stroke-width="2.3"/><circle cx="7.5" cy="7" r="2.25" fill="none" stroke="#e0a81c" stroke-width="2.3"/></svg><div class="x" style="left:28.4px">J02010200000237,V001,<span style="font-size:9px;position:relative;top:0.5px">立式包装机自制部分随机</span></div></div>
</div>
<div class="sb" style="left:124.7px;top:478.3px;width:227.7px;height:11.0px"><div class="sba" style="left:0;top:0;width:12.0px;height:11.0px"><svg style="left:3.5px;top:2.0px" width="5" height="7" viewBox="0 0 5 7"><path d="M4 0.8L1.2 3.5L4 6.2" fill="none" stroke="#444" stroke-width="1.3"/></svg></div><div class="sba" style="right:0;top:0;width:12.0px;height:11.0px"><svg style="left:3.5px;top:2.0px" width="5" height="7" viewBox="0 0 5 7"><path d="M1 0.8L3.8 3.5L1 6.2" fill="none" stroke="#444" stroke-width="1.3"/></svg></div><div class="sbt" style="left:12.8px;top:0;width:180.0px;height:11.0px"><div style="left:50%;top:3.5px;margin-left:-2px;width:5px;height:4px;border-left:1px solid #bdbdbd;border-right:1px solid #bdbdbd"><div style="left:1px;top:0;width:1px;height:4px;background:#bdbdbd"></div></div></div></div>
<div style="left:352.4px;top:136.5px;width:1.8px;height:353.5px;background:#b4b4b4"></div>
<div style="left:123.6px;top:136.3px;width:1px;height:353.5px;background:#a6a6a6"></div>
<div style="left:123.6px;top:489.3px;width:230.5px;height:1px;background:#a6a6a6"></div>
<div style="left:124px;top:136px;width:229px;height:0.8px;background:#8fb5c9"></div>
<div style="left:124.5px;top:494px;width:229.5px;height:50px;background:#fff;border:1px solid #9db8d2;overflow:hidden"><div style="left:0;top:0;width:260px;height:14px;background:#a9bfbb;line-height:13.5px"><div class="th" style="left:0.0px;width:23.0px">类型</div><div class="th" style="left:23.0px;width:57.4px">文档名称</div><div class="th" style="left:80.4px;width:57.1px">文档编码</div><div class="th" style="left:137.5px;width:58.2px">文档版本</div><div class="th" style="left:195.7px;width:58.0px">文档状态</div></div></div>
<div class="sb" style="left:125.5px;top:533.0px;width:227.5px;height:10.8px"><div class="sba" style="left:0;top:0;width:11.8px;height:10.8px"><svg style="left:3.4px;top:1.9px" width="5" height="7" viewBox="0 0 5 7"><path d="M4 0.8L1.2 3.5L4 6.2" fill="none" stroke="#444" stroke-width="1.3"/></svg></div><div class="sba" style="right:0;top:0;width:11.8px;height:10.8px"><svg style="left:3.4px;top:1.9px" width="5" height="7" viewBox="0 0 5 7"><path d="M1 0.8L3.8 3.5L1 6.2" fill="none" stroke="#444" stroke-width="1.3"/></svg></div><div class="sbt" style="left:12.8px;top:0;width:25.3px;height:10.8px"><div style="left:50%;top:3.4px;margin-left:-2px;width:5px;height:4px;border-left:1px solid #bdbdbd;border-right:1px solid #bdbdbd"><div style="left:1px;top:0;width:1px;height:4px;background:#bdbdbd"></div></div></div></div>
<div style="left:355px;top:116.5px;width:662.5px;height:429px;background:#f0f0f0"></div>
<div style="left:355px;top:116.5px;width:662.5px;height:61.5px;background:#fff"></div>
<div style="left:355px;top:158.2px;width:662.5px;height:1px;background:#ececec"></div>
<div class="t" style="left:368.5px;top:124px;font-size:9.6px;color:#111;word-spacing:0px"><span style="position:static;text-decoration:underline">新建BOM</span> <span style="position:static;text-decoration:underline">打开BOM</span> <span style="position:static;text-decoration:underline">保存BOM</span> <span style="position:static;text-decoration:underline">检查BOM完整性</span> <span style="position:static;text-decoration:underline">提交审签</span> <span style="position:static;text-decoration:underline">归档工艺BOM</span> <span style="position:static;text-decoration:underline">检出</span> <span style="position:static;text-decoration:underline">检入</span></div>
<div class="tab2" style="left:360.0px;top:142.5px;width:46.6px">基本信息</div>
<div class="tab2" style="left:408.1px;top:142.5px;width:46.6px">物料清单</div>
<div class="tab2 on" style="left:454.0px;top:141.5px;width:49px;height:16.5px;line-height:16.5px">工艺路线</div>
<div class="tab2" style="left:504.4px;top:142.5px;width:46.6px">工艺文档</div>
<div class="tab2" style="left:552.6px;top:142.5px;width:46.6px">引用物料</div>
<div class="tab2" style="left:600.7px;top:142.5px;width:46.6px">设计视图</div>
<div class="tab2" style="left:648.8px;top:142.5px;width:46.6px">审签信息</div>
<div class="tab2" style="left:697.0px;top:142.5px;width:46.6px">版本信息</div>
<div class="tab2 on" style="left:358.5px;top:162.3px;width:49.5px;height:16px;line-height:16px">基本信息</div>
<div class="tab2" style="left:409px;top:163.5px;width:55.7px;height:14.8px;line-height:14.8px">自定义属性</div>
<div style="left:357px;top:178.3px;width:660px;height:1px;background:#fafafa"></div>
<div class="lab" style="left:362.5px;top:185.2px">物料编码:</div><div class="inp" style="left:408px;top:181.8px;width:278.8px">J01130000000001</div><div class="lab" style="left:691px;top:185.2px">物料版本:</div><div class="inp" style="left:737px;top:181.8px;width:274.7px">V001</div>
<div class="lab" style="left:362.5px;top:202.2px">物料名称:</div><div class="inp" style="left:408px;top:200.4px;width:278.8px"><span style="font-size:9.2px;position:relative;top:1px">立式包装机</span></div><div class="lab" style="left:691px;top:202.2px">工艺版本:</div><div class="inp" style="left:737px;top:200.4px;width:274.7px">V001</div>
<div class="lab" style="left:362.5px;top:219.1px">生效日期:</div><div class="inp" style="left:408px;top:219.0px;width:263.0px"></div><svg style="left:674.0px;top:219.8px" width="12" height="12" viewBox="0 0 12 12"><rect x="0.3" y="1.6" width="11.4" height="10" rx="1.3" fill="#1e8fd0"/><rect x="1.6" y="4.2" width="8.8" height="6.2" fill="#eaf5fc"/><path d="M3.2 0.6v2.2M8.8 0.6v2.2" stroke="#1e8fd0" stroke-width="1.2"/><path d="M3.5 5v5M5.3 5v5M7.1 5v5M8.9 5v5M1.6 6.7h8.8M1.6 8.6h8.8" stroke="#1e8fd0" stroke-width="0.6"/></svg><div class="lab" style="left:691px;top:219.1px">失效日期:</div><div class="inp" style="left:737px;top:219.0px;width:259.0px"></div><svg style="left:998.5px;top:219.8px" width="12" height="12" viewBox="0 0 12 12"><rect x="0.3" y="1.6" width="11.4" height="10" rx="1.3" fill="#1e8fd0"/><rect x="1.6" y="4.2" width="8.8" height="6.2" fill="#eaf5fc"/><path d="M3.2 0.6v2.2M8.8 0.6v2.2" stroke="#1e8fd0" stroke-width="1.2"/><path d="M3.5 5v5M5.3 5v5M7.1 5v5M8.9 5v5M1.6 6.7h8.8M1.6 8.6h8.8" stroke="#1e8fd0" stroke-width="0.6"/></svg>
<div class="lab" style="left:372.0px;top:236.7px">有效性:</div><div class="inp" style="left:408px;top:237.6px;width:278.8px"><span style="font-size:9.2px;position:relative;top:1px">生效</span></div>
<div style="left:360.5px;top:261px;width:651.5px;height:21.5px;border:1px solid #c4c4c4;border-radius:1px"></div><div class="lab" style="left:365px;top:255px;background:#f0f0f0;padding:0 1px">工艺版本说明</div><div style="left:363.5px;top:269px;width:634px;height:10.5px;background:#fff;border:1px solid #a9bdd4"></div><div style="left:1000.5px;top:269.5px;width:9px;height:10px;background:#fdfdfd;border:1px solid #d0d0d0"><svg style="left:1px;top:0.5px" width="5" height="7" viewBox="0 0 5 7"><path d="M0.5 2.8l2-2 2 2M0.5 4.4l2 2 2-2" fill="none" stroke="#333" stroke-width="0.9"/></svg></div>
<div style="left:357px;top:285.5px;width:660px;height:1.5px;background:#fcfcfc"></div>
<div style="left:357px;top:287px;width:660px;height:1px;background:#d8d8d8"></div>
<div style="left:361px;top:293px;width:652px;height:203px;border:1px solid #c4c4c4"></div><div class="lab" style="left:365px;top:287px;background:#f0f0f0;padding:0 1px">工序</div>
<div class="lab" style="left:367px;top:305px">查找:</div><div style="left:394px;top:304.2px;width:53px;height:14.8px;background:#fff;border:1px solid #d5d5d5"></div><svg style="left:452px;top:306px" width="24" height="10" viewBox="0 0 24 10"><path d="M5.5 1.5L2.5 5l3 3.5" fill="none" stroke="#333" stroke-width="0.9"/><path d="M16.5 1.5l3 3.5l-3 3.5" fill="none" stroke="#333" stroke-width="0.9"/></svg><div class="lab" style="left:482.5px;top:304.8px">工序步进长度:</div><div class="inp" style="left:549.5px;top:304.5px;width:170px;background:#fff;border-color:#d5d5d5">10</div><div style="left:724.8px;top:306.2px;width:9px;height:8.8px;background:#fff;border:1px solid #707070"><svg style="left:0;top:0" width="7" height="7" viewBox="0 0 7 7"><path d="M1 3.6l1.8 1.9L6 1.3" fill="none" stroke="#000" stroke-width="1.4"/></svg></div><div class="lab" style="left:738px;top:305px">是否自动计算工序号</div>
<div style="left:362.5px;top:322.5px;width:625.5px;height:172.5px;background:#fff;border:1px solid #9db8d2;overflow:hidden">
<div style="left:0;top:0;width:700px;height:15px;background:#a9bfbb;line-height:14.5px"><div class="th" style="left:-0.6px;width:38.6px">序号</div><div class="th" style="left:38.0px;width:46.2px">工序号</div><div class="th" style="left:84.2px;width:64.5px">工序名称</div><div class="th" style="left:148.7px;width:57.9px">工序编码</div><div class="th" style="left:206.6px;width:45.6px">关键工序</div><div class="th" style="left:252.2px;width:92.0px">工作中心名称</div><div class="th" style="left:344.2px;width:46.4px">是否委外</div><div class="th" style="left:390.6px;width:11.2px">...</div><div class="th" style="left:401.8px;width:50.7px">加工工时</div><div class="th" style="left:452.5px;width:50.7px">工时单位</div><div class="th" style="left:503.2px;width:92.0px">工序描述</div><div class="th" style="left:595.2px;width:48.0px">工</div></div>
<div class="row" style="top:15.00px;width:595.2px"><div class="td" style="left:-0.6px;width:38.6px">1</div><div class="td" style="left:38.0px;width:46.2px">0010</div><div class="td" style="left:84.2px;width:64.5px"><span style="font-size:9.1px;position:relative;top:0.8px">领料</span></div><div class="td" style="left:148.7px;width:57.9px">FZ01</div><div class="td" style="left:206.6px;width:45.6px"><span style="font-size:9.1px;position:relative;top:0.8px">否</span></div><div class="td" style="left:252.2px;width:92.0px"><span style="font-size:9.1px;position:relative;top:0.8px">制作车间</span></div><div class="td" style="left:344.2px;width:46.4px"><span style="font-size:9.1px;position:relative;top:0.8px">厂内</span></div><div class="td" style="left:390.6px;width:11.2px"></div><div class="td" style="left:401.8px;width:50.7px">108</div><div class="td" style="left:452.5px;width:50.7px"><span style="font-size:9.1px;position:relative;top:0.8px">分</span></div><div class="td" style="left:503.2px;width:92.0px"><span style="font-size:9.1px;position:relative;top:0.8px">领料</span></div></div>
<div class="row" style="top:29.84px;width:595.2px"><div class="td" style="left:-0.6px;width:38.6px">2</div><div class="td" style="left:38.0px;width:46.2px">0020</div><div class="td" style="left:84.2px;width:64.5px"><span style="font-size:9.1px;position:relative;top:0.8px">部装</span></div><div class="td" style="left:148.7px;width:57.9px">ZP04</div><div class="td" style="left:206.6px;width:45.6px"><span style="font-size:9.1px;position:relative;top:0.8px">否</span></div><div class="td" style="left:252.2px;width:92.0px"><span style="font-size:9.1px;position:relative;top:0.8px">装配车间</span></div><div class="td" style="left:344.2px;width:46.4px"><span style="font-size:9.1px;position:relative;top:0.8px">厂内</span></div><div class="td" style="left:390.6px;width:11.2px"></div><div class="td" style="left:401.8px;width:50.7px">126</div><div class="td" style="left:452.5px;width:50.7px"><span style="font-size:9.1px;position:relative;top:0.8px">分</span></div><div class="td" style="left:503.2px;width:92.0px"><span style="font-size:9.1px;position:relative;top:0.8px">部装</span></div></div>
<div class="row" style="top:44.68px;width:595.2px"><div class="td" style="left:-0.6px;width:38.6px">3</div><div class="td" style="left:38.0px;width:46.2px">0030</div><div class="td" style="left:84.2px;width:64.5px"><span style="font-size:9.1px;position:relative;top:0.8px">总装</span></div><div class="td" style="left:148.7px;width:57.9px">ZP05</div><div class="td" style="left:206.6px;width:45.6px"><span style="font-size:9.1px;position:relative;top:0.8px">否</span></div><div class="td" style="left:252.2px;width:92.0px"><span style="font-size:9.1px;position:relative;top:0.8px">装配车间</span></div><div class="td" style="left:344.2px;width:46.4px"><span style="font-size:9.1px;position:relative;top:0.8px">厂内</span></div><div class="td" style="left:390.6px;width:11.2px"></div><div class="td" style="left:401.8px;width:50.7px">744</div><div class="td" style="left:452.5px;width:50.7px"><span style="font-size:9.1px;position:relative;top:0.8px">分</span></div><div class="td" style="left:503.2px;width:92.0px"><span style="font-size:9.1px;position:relative;top:0.8px">总装</span></div></div>
<div class="row" style="top:59.52px;width:595.2px"><div class="td" style="left:-0.6px;width:38.6px">4</div><div class="td" style="left:38.0px;width:46.2px">0040</div><div class="td" style="left:84.2px;width:64.5px"><span style="font-size:9.1px;position:relative;top:0.8px">调试</span></div><div class="td" style="left:148.7px;width:57.9px">ZP06</div><div class="td" style="left:206.6px;width:45.6px"><span style="font-size:9.1px;position:relative;top:0.8px">否</span></div><div class="td" style="left:252.2px;width:92.0px"><span style="font-size:9.1px;position:relative;top:0.8px">装配车间</span></div><div class="td" style="left:344.2px;width:46.4px"><span style="font-size:9.1px;position:relative;top:0.8px">厂内</span></div><div class="td" style="left:390.6px;width:11.2px"></div><div class="td" style="left:401.8px;width:50.7px">144</div><div class="td" style="left:452.5px;width:50.7px"><span style="font-size:9.1px;position:relative;top:0.8px">分</span></div><div class="td" style="left:503.2px;width:92.0px"><span style="font-size:9.1px;position:relative;top:0.8px">调试</span></div></div>
<div class="row" style="top:74.36px;width:595.2px"><div class="td" style="left:-0.6px;width:38.6px">5</div><div class="td" style="left:38.0px;width:46.2px">0050</div><div class="td" style="left:84.2px;width:64.5px"><span style="font-size:9.1px;position:relative;top:0.8px">拆机</span></div><div class="td" style="left:148.7px;width:57.9px">ZP13</div><div class="td" style="left:206.6px;width:45.6px"><span style="font-size:9.1px;position:relative;top:0.8px">否</span></div><div class="td" style="left:252.2px;width:92.0px"><span style="font-size:9.1px;position:relative;top:0.8px">装配车间</span></div><div class="td" style="left:344.2px;width:46.4px"><span style="font-size:9.1px;position:relative;top:0.8px">厂内</span></div><div class="td" style="left:390.6px;width:11.2px"></div><div class="td" style="left:401.8px;width:50.7px">30</div><div class="td" style="left:452.5px;width:50.7px"><span style="font-size:9.1px;position:relative;top:0.8px">分</span></div><div class="td" style="left:503.2px;width:92.0px"><span style="font-size:9.1px;position:relative;top:0.8px">拆机</span></div></div>
<div class="row" style="top:89.20px;width:595.2px"><div class="td" style="left:-0.6px;width:38.6px">6</div><div class="td" style="left:38.0px;width:46.2px">0060</div><div class="td" style="left:84.2px;width:64.5px;border:1px solid #1c2b3a;line-height:12px;padding-left:0"><span style="font-size:9.1px;position:relative;top:0.8px">装箱</span></div><div class="td" style="left:148.7px;width:57.9px">ZP14</div><div class="td" style="left:206.6px;width:45.6px"><span style="font-size:9.1px;position:relative;top:0.8px">否</span></div><div class="td" style="left:252.2px;width:92.0px"><span style="font-size:9.1px;position:relative;top:0.8px">装配车间</span></div><div class="td" style="left:344.2px;width:46.4px"><span style="font-size:9.1px;position:relative;top:0.8px">厂内</span></div><div class="td" style="left:390.6px;width:11.2px"></div><div class="td" style="left:401.8px;width:50.7px">30</div><div class="td" style="left:452.5px;width:50.7px"><span style="font-size:9.1px;position:relative;top:0.8px">分</span></div><div class="td" style="left:503.2px;width:92.0px"><span style="font-size:9.1px;position:relative;top:0.8px">装箱</span></div></div>
<div style="left:594.5px;top:28.84px;width:40px;height:1px;background:#d9e4ef"></div><div style="left:594.5px;top:43.68px;width:40px;height:1px;background:#d9e4ef"></div><div style="left:594.5px;top:58.52px;width:40px;height:1px;background:#d9e4ef"></div><div style="left:594.5px;top:73.36px;width:40px;height:1px;background:#d9e4ef"></div><div style="left:594.5px;top:88.20px;width:40px;height:1px;background:#d9e4ef"></div><div style="left:594.5px;top:103.04px;width:40px;height:1px;background:#d9e4ef"></div></div>
<div class="sb" style="left:404.0px;top:483.0px;width:583.0px;height:11.2px"><div class="sba" style="left:0;top:0;width:12.2px;height:11.2px"><svg style="left:3.6px;top:2.1px" width="5" height="7" viewBox="0 0 5 7"><path d="M4 0.8L1.2 3.5L4 6.2" fill="none" stroke="#444" stroke-width="1.3"/></svg></div><div class="sba" style="right:0;top:0;width:12.2px;height:11.2px"><svg style="left:3.6px;top:2.1px" width="5" height="7" viewBox="0 0 5 7"><path d="M1 0.8L3.8 3.5L1 6.2" fill="none" stroke="#444" stroke-width="1.3"/></svg></div><div class="sbt" style="left:12.0px;top:0;width:472.8px;height:11.2px"><div style="left:50%;top:3.6px;margin-left:-2px;width:5px;height:4px;border-left:1px solid #bdbdbd;border-right:1px solid #bdbdbd"><div style="left:1px;top:0;width:1px;height:4px;background:#bdbdbd"></div></div></div></div>
<svg style="left:994.7px;top:327.9px" width="11" height="11" viewBox="0 0 11 11"><path d="M2.6 0.6H9.6V10H0.7V2.4z" fill="#fdfdfd" stroke="#858585" stroke-width="0.8"/><path d="M2.6 0.9H9.3V4.2L1 5.2V2.5z" fill="#a2a2a2"/><path d="M0.7 2.5H2.7V0.6" fill="#e8e8e8" stroke="#858585" stroke-width="0.5"/></svg><svg style="left:994.5px;top:346.5px" width="13" height="11" viewBox="0 0 13 11"><defs><linearGradient id="dg" x1="0" x2="1"><stop offset="0" stop-color="#4459bd"/><stop offset="1" stop-color="#a9b7ea"/></linearGradient></defs><path d="M0.5 0.5h8.6v9l-8.6 0.4z" fill="url(#dg)"/><circle cx="8.7" cy="6.6" r="3.1" fill="#f0701a"/><circle cx="8.7" cy="6.6" r="1.3" fill="#ffe7b0"/></svg>
<svg style="left:994.2px;top:364.4px" width="11" height="11" viewBox="0 0 11 11"><path d="M2.6 0.6H9.6V10H0.7V2.4z" fill="#fdfdfd" stroke="#858585" stroke-width="0.8"/><path d="M2.6 0.9H9.3V4.2L1 5.2V2.5z" fill="#8a8a8a"/><path d="M0.7 2.5H2.7V0.6" fill="#e8e8e8" stroke="#858585" stroke-width="0.5"/></svg><svg style="left:996px;top:367.5px" width="11" height="10" viewBox="0 0 11 10"><path d="M8.3 0.5l2.2 2.2l-6.3 5.8l-3.2 1.2l1.2-3.2z" fill="#f39a1e" stroke="#c96a10" stroke-width="0.5"/><path d="M1 9.7l1.2-3.2l2 2z" fill="#555"/></svg>
<div style="left:994px;top:383.1px;width:12.4px;height:11.8px;background:linear-gradient(#8797cd,#a5b0dc);border:1px solid #7d8dc4"><svg style="left:0.7px;top:1.6px" width="9" height="6" viewBox="0 0 9 6"><path d="M0 5.4L4.5 0.5L9 5.4L4.5 3.8z" fill="#f4f6fc"/></svg></div>
<div style="left:994px;top:401.6px;width:12.4px;height:11.8px;background:linear-gradient(#8797cd,#a5b0dc);border:1px solid #7d8dc4"><svg style="left:0.7px;top:2.4px" width="9" height="6" viewBox="0 0 9 6"><path d="M0 0.6L4.5 5.5L9 0.6L4.5 2.6z" fill="#f4f6fc"/></svg></div>
<div style="left:357px;top:499px;width:660px;height:1.5px;background:#fcfcfc"></div>
<div style="left:357px;top:500.5px;width:660px;height:1px;background:#d8d8d8"></div>
<div class="tab2 on" style="left:358.5px;top:505.3px;width:49.5px;height:16px;line-height:16px">工艺资源</div>
<div class="tab2" style="left:410px;top:506px;width:27.3px;height:15.3px;line-height:14.8px">物料</div>
<div class="tab2" style="left:439px;top:506px;width:47px;height:15.3px;line-height:14.8px">工序文档</div>
<div style="left:358.5px;top:521.3px;width:657px;height:22.5px;background:#fbfbfb"></div>
<div style="left:358.5px;top:521.8px;width:633px;height:1.3px;background:#9db8d2"></div>
<div style="left:359.5px;top:523.1px;width:632px;height:20.4px;background:#fff;border:1px solid #9db8d2;border-top:none;overflow:hidden"><div style="left:0;top:0;width:640px;height:13.5px;background:#a9bfbb;line-height:13.5px"><div class="th" style="left:0.0px;width:30.1px">序号</div><div class="th" style="left:30.1px;width:107.0px">分类</div><div class="th" style="left:137.1px;width:107.0px">编码</div><div class="th" style="left:244.1px;width:46.0px">版本</div><div class="th" style="left:290.1px;width:46.0px">类型</div><div class="th" style="left:336.1px;width:107.4px">名称</div><div class="th" style="left:443.5px;width:46.6px">用量</div><div class="th" style="left:490.1px;width:141.4px"></div></div></div>
<svg style="left:1001.3px;top:527.3px" width="11" height="11" viewBox="0 0 11 11"><path d="M2.6 0.6H9.6V10H0.7V2.4z" fill="#fdfdfd" stroke="#858585" stroke-width="0.8"/><path d="M2.6 0.9H9.3V4.2L1 5.2V2.5z" fill="#a2a2a2"/><path d="M0.7 2.5H2.7V0.6" fill="#e8e8e8" stroke="#858585" stroke-width="0.5"/></svg></div>
</body></html>
